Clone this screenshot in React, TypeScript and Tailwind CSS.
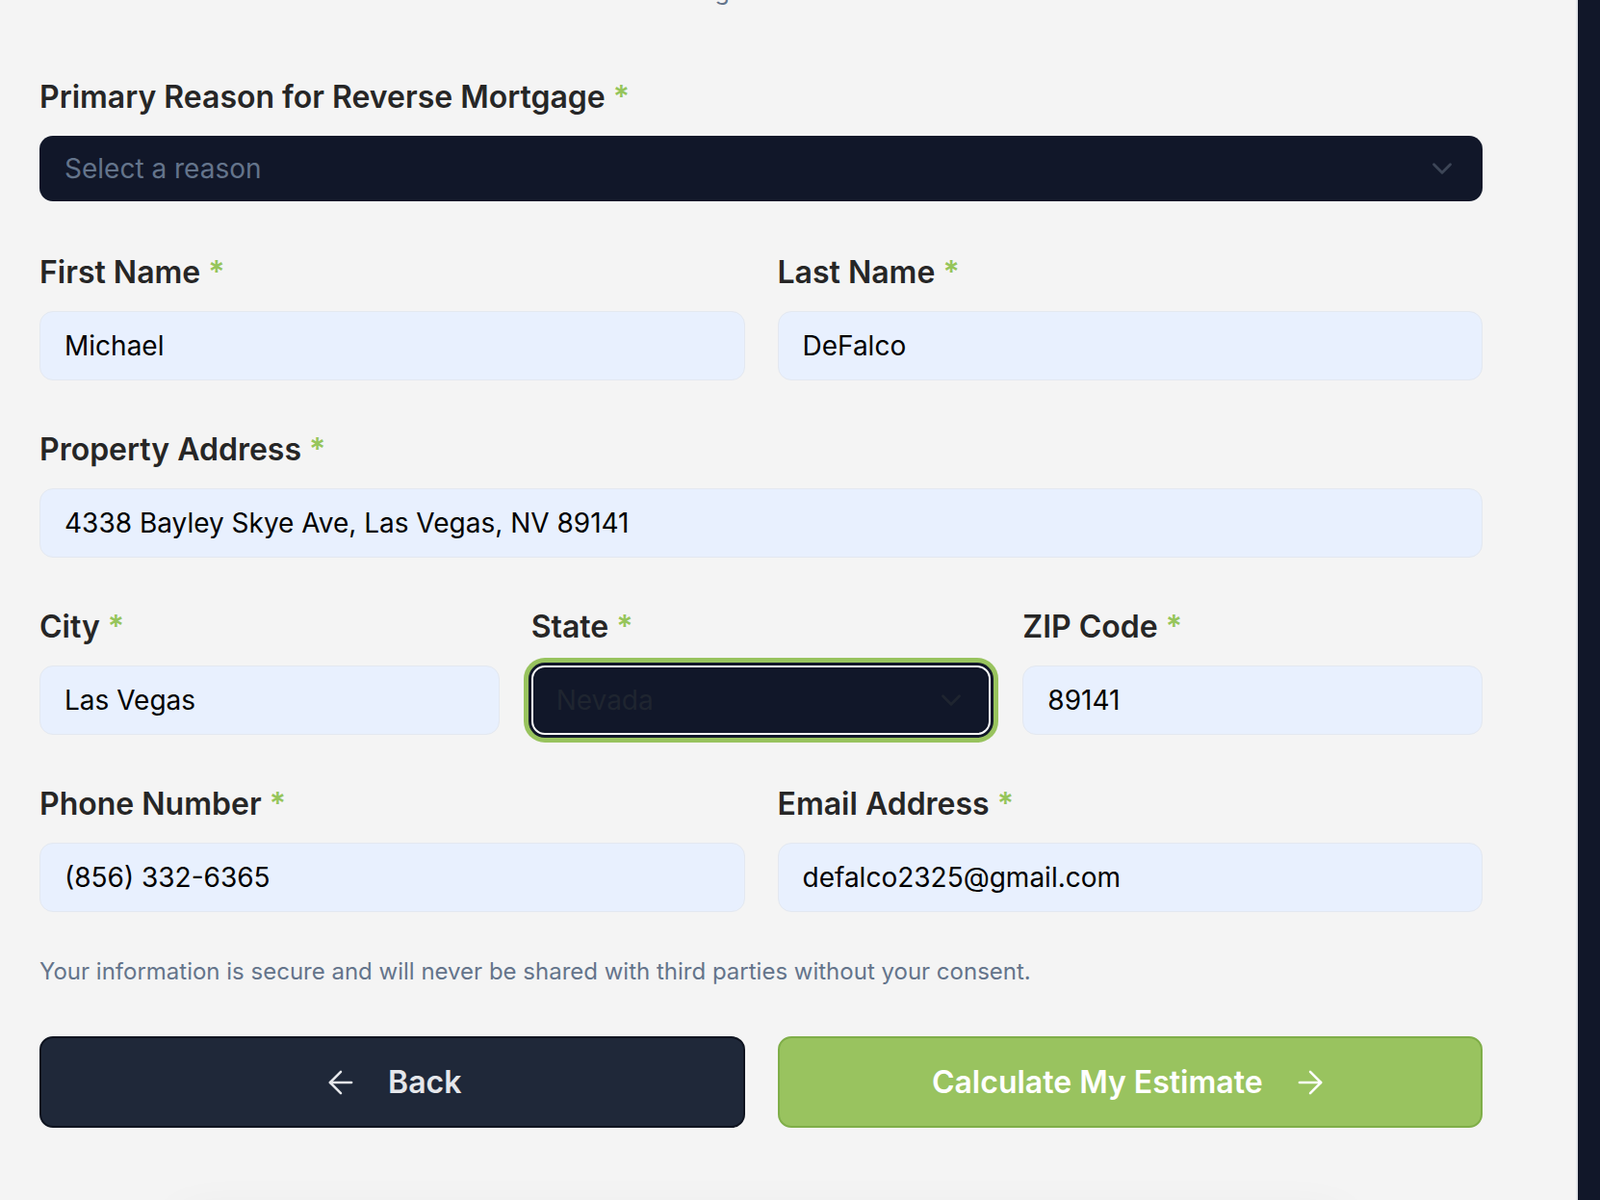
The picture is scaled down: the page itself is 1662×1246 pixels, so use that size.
import { ArrowLeft, ArrowRight, ChevronDown } from "lucide-react";

type FieldProps = {
  label: string;
  value: string;
};

function Label({ children }: { children: string }) {
  return (
    <label className="block text-[32px] leading-[44px] font-semibold text-[#262626]">
      {children} <span className="text-[#96c55b]">*</span>
    </label>
  );
}

function TextField({ label, value }: FieldProps) {
  return (
    <div>
      <Label>{label}</Label>
      <input
        readOnly
        defaultValue={value}
        className="mt-[18px] block h-[72px] w-full rounded-[14px] border border-[#e3e8f0] bg-[#e8f0fe] px-[25px] text-[28px] text-black outline-none"
      />
    </div>
  );
}

export default function App() {
  return (
    <div className="flex h-[1246px] overflow-hidden bg-[#f4f4f4] font-['Inter',sans-serif]">
      <main className="flex-1 pl-[41px] pr-[97px]">
        <p className="-mt-[25px] h-[32px] pl-[486px] text-[25px] leading-[32px] text-[#64748b]">
          Personal &amp; Housing
        </p>

        <div className="mt-[72px]">
          <Label>Primary Reason for Reverse Mortgage</Label>
          <div className="mt-[18px] flex h-[68px] items-center justify-between rounded-[14px] bg-[#111729] pl-[26px] pr-[25px]">
            <span className="text-[28px] text-[#64748b]">Select a reason</span>
            <ChevronDown size={34} strokeWidth={2} className="text-[#3d4657]" />
          </div>
        </div>

        <div className="mt-[52px] grid grid-cols-2 gap-x-[34px]">
          <TextField label="First Name" value="Michael" />
          <TextField label="Last Name" value="DeFalco" />
        </div>

        <div className="mt-[50px]">
          <TextField
            label="Property Address"
            value="4338 Bayley Skye Ave, Las Vegas, NV 89141"
          />
        </div>

        <div className="mt-[50px] grid grid-cols-3 gap-x-[33px]">
          <TextField label="City" value="Las Vegas" />
          <div>
            <Label>State</Label>
            <div className="mt-[18px] flex h-[72px] items-center justify-between rounded-[14px] border-2 border-white bg-[#111729] pl-[24px] pr-[22px] shadow-[0_0_0_3px_#111729,0_0_0_8px_#98c35e]">
              <span className="text-[28px] text-[#1f2530]">Nevada</span>
              <ChevronDown size={34} strokeWidth={2} className="text-[#1f2530]" />
            </div>
          </div>
          <TextField label="ZIP Code" value="89141" />
        </div>

        <div className="mt-[50px] grid grid-cols-2 gap-x-[34px]">
          <TextField label="Phone Number" value="(856) 332-6365" />
          <TextField label="Email Address" value="defalco2325@gmail.com" />
        </div>

        <p className="mt-[44px] text-[24px] leading-[35px] text-[#64748b]">
          Your information is secure and will never be shared with third parties without your consent.
        </p>

        <div className="mt-[50px] grid grid-cols-2 gap-x-[34px]">
          <button className="flex h-[95px] items-center justify-center gap-[30px] rounded-[14px] border-2 border-[#0f1420] bg-[#1f2839] text-[32px] font-semibold text-[#e5e7eb]">
            <ArrowLeft size={38} strokeWidth={1.6} />
            Back
          </button>
          <button className="flex h-[95px] items-center justify-center gap-[30px] rounded-[14px] border-2 border-[#7fae48] bg-[#99c35f] text-[32px] font-semibold text-white">
            Calculate My Estimate
            <ArrowRight size={38} strokeWidth={1.6} />
          </button>
        </div>

        <div className="mx-[140px] mt-[100px] h-[200px] rounded-[24px] bg-[#f4f4f4] shadow-[0_-10px_50px_rgba(0,0,0,0.05)]" />
      </main>
      <aside className="w-[25px] border-l-2 border-[#e2e4e8] bg-[#111729]" />
    </div>
  );
}
